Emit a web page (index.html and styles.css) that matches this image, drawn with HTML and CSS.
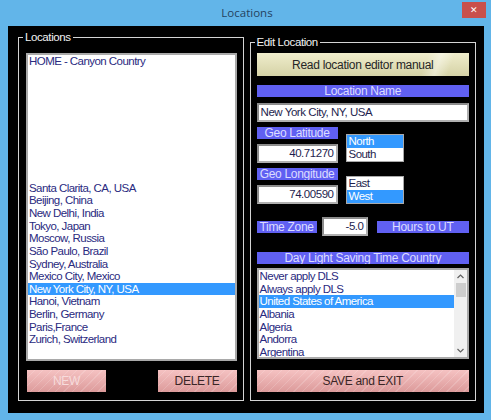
FILE: index.html
```html
<!DOCTYPE html>
<html lang="en">
  <head>
    <meta name="viewport" content="width=device-width, initial-scale=1.0" />
    <title>Locations</title>
    <link rel="stylesheet" href="styles.css">
  </head>
  <body>
    <div class="window">
      <div class="titlebar">
        <span></span>
        <span class="title">Locations</span>
        <span class="close-wrap"><span class="close">&#x2715;</span></span>
      </div>

      <div class="client">
        <!-- saved locations -->
        <div class="group locations">
          <span class="group-title">Locations</span>
          <ul class="listbox places">
            <li>HOME - Canyon Country</li>
            <li></li><li></li><li></li><li></li><li></li>
            <li></li><li></li><li></li><li></li>
            <li>Santa Clarita, CA, USA</li>
            <li>Beijing, China</li>
            <li>New Delhi, India</li>
            <li>Tokyo, Japan</li>
            <li>Moscow, Russia</li>
            <li>São Paulo, Brazil</li>
            <li>Sydney, Australia</li>
            <li>Mexico City, Mexico</li>
            <li class="selected">New York City, NY, USA</li>
            <li>Hanoi, Vietnam</li>
            <li>Berlin, Germany</li>
            <li>Paris,France</li>
            <li>Zurich, Switzerland</li>
          </ul>
          <div class="list-buttons">
            <button class="btn pink disabled">NEW</button>
            <button class="btn pink">DELETE</button>
          </div>
        </div>

        <!-- editor for the selected location -->
        <div class="group edit">
          <span class="group-title">Edit Location</span>
          <button class="btn manual">Read location editor manual</button>

          <div class="bar name-bar">Location Name</div>
          <div class="field name-field">New York City, NY, USA</div>

          <div class="coord">
            <div class="coord-col">
              <div class="bar">Geo Latitude</div>
              <div class="field num">40.71270</div>
            </div>
            <ul class="listbox pick lat-pick">
              <li class="selected">North</li>
              <li>South</li>
            </ul>
          </div>

          <div class="coord">
            <div class="coord-col">
              <div class="bar">Geo Longitude</div>
              <div class="field num">74.00590</div>
            </div>
            <ul class="listbox pick lon-pick">
              <li>East</li>
              <li class="selected">West</li>
            </ul>
          </div>

          <div class="tz-row">
            <div class="bar tz-bar">Time Zone</div>
            <div class="field num tz-field">-5.0</div>
            <div class="bar hours-bar">Hours to UT</div>
          </div>

          <div class="bar dls-bar">Day Light Saving Time Country</div>
          <div class="listbox dls">
            <ul class="dls-items">
              <li>Never apply DLS</li>
              <li>Always apply DLS</li>
              <li class="selected">United States of America</li>
              <li>Albania</li>
              <li>Algeria</li>
              <li>Andorra</li>
              <li>Argentina</li>
            </ul>
            <div class="scrollbar">
              <svg class="arrow" width="7" height="5" viewBox="0 0 7 5"><path d="M0.5 4 L3.5 1 L6.5 4" fill="none" stroke="#606060" stroke-width="1.2"/></svg>
              <div class="thumb"></div>
              <div class="track"></div>
              <svg class="arrow" width="7" height="5" viewBox="0 0 7 5"><path d="M0.5 1 L3.5 4 L6.5 1" fill="none" stroke="#606060" stroke-width="1.2"/></svg>
            </div>
          </div>

          <button class="btn pink save">SAVE and EXIT</button>
        </div>
      </div>
    </div>
  </body>
</html>
```

FILE: styles.css
```css
html,
body {
  margin: 0;
  padding: 0;
  background: #62b5e9;
}

body {
  font-family: "Liberation Sans", Arial, sans-serif;
  font-size: 11px;
  letter-spacing: -0.3px;
}

ul {
  list-style: none;
  margin: 0;
  padding: 0;
}

.window {
  width: 491px;
  height: 420px;
  box-sizing: border-box;
  background: #62b5e9;
  padding: 0 7px 7px 8px;
  display: flex;
  flex-direction: column;
}

/* Title bar */
.titlebar {
  height: 26px;
  margin-right: -2px;
  display: grid;
  grid-template-columns: 1fr auto 1fr;
  align-items: start;
}

.title {
  font-family: "Open Sans", sans-serif;
  font-size: 11.5px;
  letter-spacing: 0;
  color: #24425f;
  line-height: 26px;
}

.close-wrap {
  display: flex;
  justify-content: flex-end;
  padding-top: 2px;
}

.close {
  width: 24px;
  height: 16px;
  background: #c9504b;
  color: #fff;
  font-size: 9px;
  line-height: 16px;
  text-align: center;
}

/* Client area */
.client {
  flex: 1;
  background: #000;
  display: flex;
  gap: 6px;
  padding: 11px 8px 12px 10px;
}

.group {
  position: relative;
  border: 1px solid #d4d4d4;
  display: flex;
  flex-direction: column;
}

.group-title {
  position: absolute;
  top: -7px;
  left: 4px;
  padding: 0 2px;
  background: #000;
  color: #f2f2f2;
  font-size: 11.5px;
  letter-spacing: -0.4px;
  line-height: 13px;
}

.locations {
  width: 223px;
  padding: 15px 6px 8px 7px;
}

.edit {
  width: 225px;
  margin-top: 5px;
  padding: 10px 6px 8px 6px;
}

/* List boxes */
.listbox {
  background: #fff;
  border: 2px solid #a9a9a9;
  color: #2a2a80;
  font-size: 11.5px;
  letter-spacing: -0.55px;
}

.listbox li {
  height: 12.67px;
  line-height: 12.67px;
  padding-left: 1px;
  white-space: nowrap;
}

.listbox li.selected {
  background: #3399ff;
  color: #fff;
}

.places {
  flex: 1;
  box-sizing: border-box;
}

.list-buttons {
  display: flex;
  justify-content: space-between;
  margin-top: 9px;
  padding-left: 1px;
}

/* Buttons */
.btn {
  font-family: "Liberation Sans", Arial, sans-serif;
  font-size: 12px;
  letter-spacing: -0.3px;
  border: 0;
  padding: 0;
  height: 22px;
  color: #3a2626;
}

.pink {
  width: 79px;
  background:
    repeating-linear-gradient(135deg, rgba(255, 255, 255, 0) 0 5px, rgba(255, 255, 255, 0.16) 5px 6px),
    linear-gradient(#f5c2c2, #dc9a9a);
}

.pink.disabled {
  color: #f7dcdc;
}

.manual {
  height: 23px;
  background:
    linear-gradient(110deg, rgba(255, 255, 255, 0) 78%, rgba(255, 255, 250, 0.45) 84%, rgba(255, 255, 255, 0) 90%),
    linear-gradient(#efedcc, #d5d2a6);
  color: #262626;
}

.save {
  width: 100%;
  margin-top: 11px;
}

/* Blue captions */
.bar {
  height: 12px;
  line-height: 12px;
  background: #6060f2;
  color: #dcdcff;
  font-size: 12px;
  text-align: center;
  overflow: hidden;
}

.name-bar {
  margin-top: 9px;
}

/* Text fields */
.field {
  height: 19px;
  box-sizing: border-box;
  background: #fff;
  border: 2px solid #b0b0b0;
  border-top-color: #8c8c8c;
  border-left-color: #8c8c8c;
  color: #1e1e4e;
  font-size: 11.5px;
  letter-spacing: -0.45px;
  line-height: 15px;
  padding: 0 2px;
  white-space: nowrap;
}

.num {
  text-align: right;
}

.name-field {
  margin-top: 6px;
}

/* Latitude / longitude rows */
.coord {
  display: grid;
  grid-template-columns: 81px 58px;
  gap: 8px;
  align-items: start;
  margin-top: 5px;
}

.coord-col {
  display: flex;
  flex-direction: column;
  gap: 5px;
}

.pick {
  border-width: 1px;
  color: #1e1e4e;
}

.pick li {
  height: 13px;
  line-height: 13px;
  padding-left: 2px;
}

.lat-pick {
  margin-top: 7px;
}

.lon-pick {
  margin-top: 8px;
}

/* Time zone row */
.tz-row {
  display: flex;
  align-items: center;
  margin-top: 13px;
}

.tz-bar {
  width: 60px;
}

.tz-field {
  width: 46px;
  margin-left: 5px;
}

.hours-bar {
  flex: 1;
  margin-left: 9px;
}

/* Daylight saving list */
.dls-bar {
  margin-top: 16px;
}

.dls {
  margin-top: 4px;
  height: 91px;
  box-sizing: border-box;
  display: flex;
  overflow: hidden;
}

.dls-items {
  flex: 1;
}

.scrollbar {
  width: 13px;
  background: #f0f0f0;
  display: flex;
  flex-direction: column;
  align-items: center;
  padding: 4px 0;
  box-sizing: border-box;
}

.thumb {
  width: 10px;
  height: 14px;
  margin-top: 4px;
  background: #cdcdcd;
}

.track {
  flex: 1;
}
```
